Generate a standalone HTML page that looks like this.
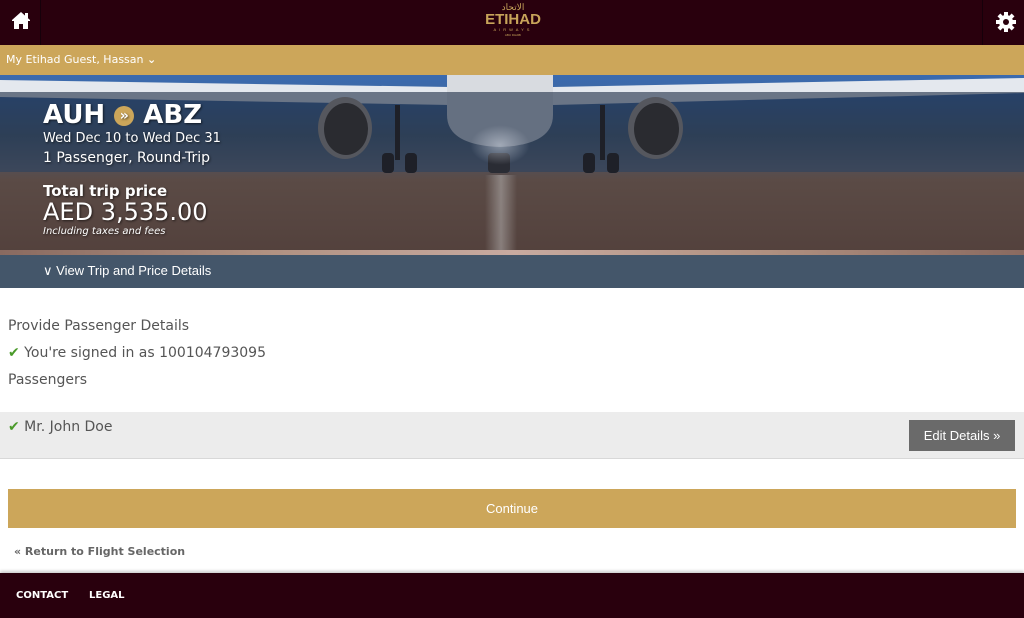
<!DOCTYPE html>
<html><head><meta charset="utf-8"><style>
*{margin:0;padding:0;box-sizing:border-box}
body{width:1024px;height:618px;overflow:hidden;font-family:"DejaVu Sans","Liberation Sans",sans-serif;background:#fff;position:relative}
.top{position:absolute;left:0;top:0;width:1024px;height:45px;background:#29000d}
.hb{position:absolute;left:0;top:0;width:41px;height:45px;border-right:1px solid #16000a}
.gb{position:absolute;right:0;top:0;width:42px;height:45px;border-left:1px solid #16000a}
.logo{position:absolute;left:478px;top:3px;width:70px;text-align:center;color:#c8a45a;font-family:"Liberation Sans",sans-serif}
.gold{position:absolute;top:45px;left:0;width:1024px;height:30px;background:#cca65a;color:#fff;font-size:11px;padding:8px 6px}
.hero{position:absolute;top:75px;left:0;width:1024px;height:180px;overflow:hidden;background:linear-gradient(#3a6ab0 0,#3d68a4 17px,#4d6277 60px,#6f7580 95px,#7a6e68 105px,#6a5a55 180px)}
.ov1{position:absolute;top:17px;left:0;width:1024px;height:80px;background:rgba(25,40,65,.6)}
.ov2{position:absolute;top:97px;left:0;width:1024px;height:78px;background:rgba(60,40,35,.5)}
.streak{position:absolute;top:175px;left:0;width:1024px;height:5px;background:linear-gradient(90deg,#8a6a60,#b09080,#c8aaa0,#b09080,#8a6a60)}
.bar{position:absolute;top:255px;left:0;width:1024px;height:33px;background:#44566a;color:#fff;font-size:13px;padding:8px 43px;font-family:"Liberation Sans Narrow","Liberation Sans",sans-serif}
.txt{position:absolute;left:43px;color:#fff;text-shadow:1px 1px 2px rgba(0,0,0,.6)}
.sec{font-size:14px;color:#555;position:absolute;left:8px}
.chk{color:#4a9a2a;font-weight:bold}
.row{position:absolute;top:412px;left:0;width:1024px;height:47px;background:#ececec;border-bottom:1px solid #d8d8d8}
.edit{position:absolute;right:9px;top:8px;width:106px;height:31px;background:#6a6a6a;color:#fff;font-size:13px;text-align:center;line-height:31px;font-family:"Liberation Sans Narrow","Liberation Sans",sans-serif}
.cont{position:absolute;top:489px;left:8px;width:1008px;height:39px;background:#cca65a;color:#fff;text-align:center;line-height:39px;font-size:13px;font-family:"Liberation Sans Narrow","Liberation Sans",sans-serif}
.foot{position:absolute;top:573px;left:0;width:1024px;height:45px;background:#29000d;box-shadow:0 -2px 3px rgba(0,0,0,.2)}
.foot span{position:absolute;top:17px;color:#fff;font-size:10px;font-weight:bold}
.p{position:absolute}
</style></head><body>
<div class="top">
 <div class="hb"><svg width="41" height="45" viewBox="0 0 41 45"><path d="M21 12 L12 20 V21 H14 V29 H19 V24 H23 V29 H28 V21 H30 V20 Z" fill="#fff"/><rect x="25" y="13" width="3" height="5" fill="#fff"/></svg></div>
 <div class="logo"><div style="font-size:9px;line-height:9px">الاتحاد</div><div style="font-size:15px;font-weight:bold;line-height:15px">ETIHAD</div><div style="font-size:4px;letter-spacing:3px;line-height:6px">AIRWAYS</div><div style="font-size:3px;line-height:5px">ABU DHABI</div></div>
 <div class="gb"><svg width="42" height="45" viewBox="0 0 42 45"><g transform="translate(23,22)" fill="#fff"><circle r="7"/><rect x="-2" y="-10" width="4" height="20"/><rect x="-2" y="-10" width="4" height="20" transform="rotate(45)"/><rect x="-2" y="-10" width="4" height="20" transform="rotate(90)"/><rect x="-2" y="-10" width="4" height="20" transform="rotate(135)"/><circle r="3" fill="#29000d"/></g></svg></div>
</div>
<div class="gold">My Etihad Guest, Hassan <b>&#x2304;</b></div>
<div class="hero">
 <svg class="p" style="left:0;top:0" width="1024" height="180">
  <polygon points="0,5 450,12 450,30 0,22" fill="#e4e8ee"/>
  <polygon points="553,12 1024,3 1024,18 553,30" fill="#e4e8ee"/>
  <path d="M447,0 H553 V40 Q553,70 500,72 Q447,70 447,40 Z" fill="#d8dbe0"/>
 </svg>
 <div class="ov1"></div><div class="ov2"></div>
 <div class="p" style="left:318px;top:22px;width:54px;height:62px;border-radius:50%;background:#55575e"></div>
 <div class="p" style="left:324px;top:28px;width:44px;height:52px;border-radius:50%;background:#2a2b30"></div>
 <div class="p" style="left:628px;top:22px;width:55px;height:62px;border-radius:50%;background:#55575e"></div>
 <div class="p" style="left:634px;top:28px;width:45px;height:52px;border-radius:50%;background:#2a2b30"></div>
 <div class="p" style="left:395px;top:30px;width:5px;height:55px;background:#1e2028"></div>
 <div class="p" style="left:600px;top:30px;width:5px;height:55px;background:#1e2028"></div>
 <div class="p" style="left:382px;top:78px;width:12px;height:20px;border-radius:4px;background:#1e2028"></div>
 <div class="p" style="left:405px;top:78px;width:12px;height:20px;border-radius:4px;background:#1e2028"></div>
 <div class="p" style="left:583px;top:78px;width:12px;height:20px;border-radius:4px;background:#1e2028"></div>
 <div class="p" style="left:607px;top:78px;width:12px;height:20px;border-radius:4px;background:#1e2028"></div>
 <div class="p" style="left:488px;top:78px;width:22px;height:20px;border-radius:4px;background:#2a2c34"></div>
 <div class="p" style="left:470px;top:50px;width:60px;height:40px;border-radius:50%;background:radial-gradient(rgba(220,225,235,.5),transparent 70%)"></div>
 <div class="p" style="left:485px;top:100px;width:32px;height:80px;background:linear-gradient(90deg,transparent,rgba(200,200,200,.45),transparent)"></div>
 <div class="streak"></div>
</div>
<div class="txt" style="top:100px;font-size:26px;font-weight:bold;line-height:30px">AUH <span style="display:inline-block;width:20px;height:20px;border-radius:50%;background:#cca65a;font-size:14px;line-height:20px;text-align:center;vertical-align:3px">»</span> ABZ</div>
<div class="txt" style="top:131px;font-size:13px">Wed Dec 10 to Wed Dec 31</div>
<div class="txt" style="top:150px;font-size:14px">1 Passenger, Round-Trip</div>
<div class="txt" style="top:182px;font-size:15px;font-weight:bold">Total trip price</div>
<div class="txt" style="top:198px;font-size:24px">AED 3,535.00</div>
<div class="txt" style="top:226px;font-size:10px;font-style:italic">Including taxes and fees</div>
<div class="bar">&#x2228; View Trip and Price Details</div>
<div class="sec" style="top:318px">Provide Passenger Details</div>
<div class="sec" style="top:345px"><span class="chk">✔</span> You're signed in as 100104793095</div>
<div class="sec" style="top:372px">Passengers</div>
<div class="row"><div class="sec" style="top:7px"><span class="chk">✔</span> Mr. John Doe</div><div class="edit">Edit Details »</div></div>
<div class="cont">Continue</div>
<div style="position:absolute;top:545px;left:14px;font-size:11px;font-weight:bold;color:#666">« Return to Flight Selection</div>
<div class="foot"><span style="left:16px">CONTACT</span><span style="left:89px">LEGAL</span></div>
</body></html>
